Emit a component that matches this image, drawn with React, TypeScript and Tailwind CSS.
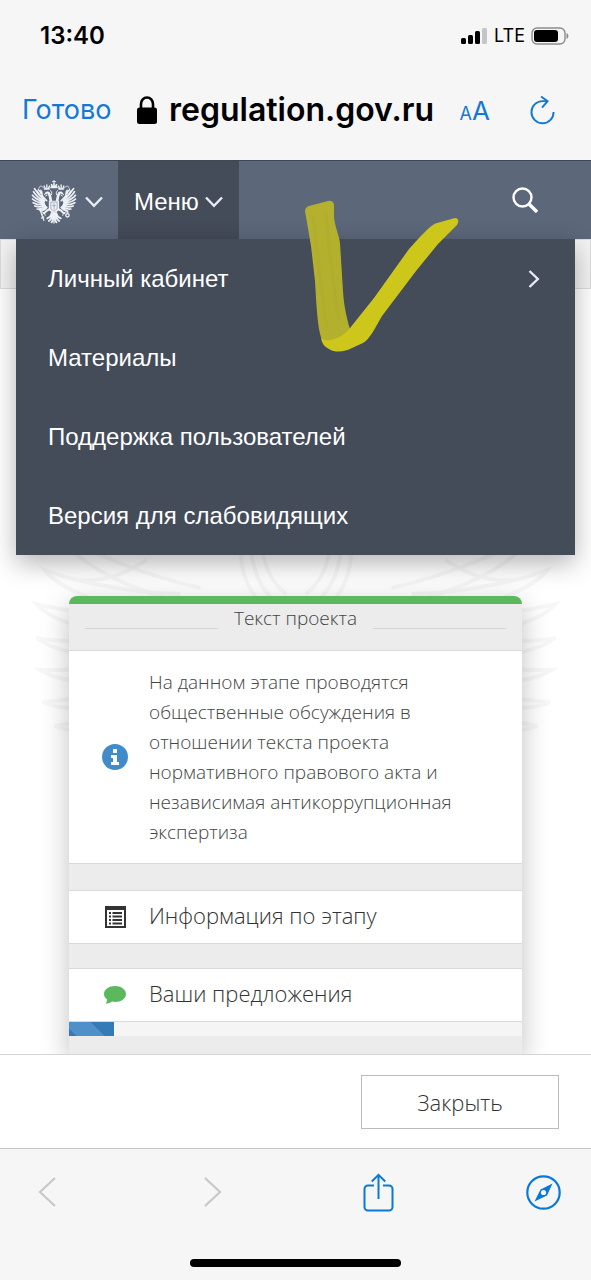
import type { ReactNode } from 'react';

const menuItems = [
  { label: 'Личный кабинет', nested: true },
  { label: 'Материалы', nested: false },
  { label: 'Поддержка пользователей', nested: false },
  { label: 'Версия для слабовидящих', nested: false },
];

function Chevron({ className }: { className: string }) {
  return (
    <svg className={className} viewBox="0 0 18 12" fill="none" stroke="currentColor" strokeWidth="2.4">
      <path d="M1 1.5 9 9.8 17 1.5" />
    </svg>
  );
}

function EagleHalf() {
  return (
    <g fill="none" stroke="currentColor" strokeLinecap="round">
      {/* Wing feathers */}
      <path
        strokeWidth="5.2"
        d="M40 62C26 50 16 38 9 26M38 65C22 54 11 45 6 35M37 68C20 60 8 54 3 46M38 71C22 68 10 64 3 57M39 74C26 75 14 73 5 68M41 77C32 81 21 82 10 78M43 80C36 86 27 88 17 87M46 82C41 89 34 92 27 93"
      />
      <path strokeWidth="4.500" d="M28 40C26 34 24 32 21 29M32 44C32 36 30 33 28 31M46 62C40 56 36 52 32 47M30 50C24 44 20 40 17 33M36 56 28 46" />
      {/* Neck, head and beak */}
      <path strokeWidth="8" d="M59 66C56 56 57 50 53 42" />
      <path strokeWidth="6" d="M53 40C50 36 46 37 43 40" />
      <path strokeWidth="3" d="M43 40 38 44M47 45 42 48M60 44C62 38 60 34 57 32" />
      {/* Small crown */}
      <path strokeWidth="4" d="M39 27h14M38 18l3 7M46 15v10M54 18l-3 7" />
      <path strokeWidth="2.5" d="M37 24C31 18 25 14 22 25M55 25C58 18 61 17 64 19" />
      {/* Leg and tail */}
      <path strokeWidth="6" d="M55 87C48 90 43 94 39 99" />
      <path strokeWidth="3" d="M39 99 32 96M39 99 33 103M39 99 41 106" />
      <path strokeWidth="5.5" d="M61 99C59 108 53 113 47 115M63 101C62 113 58 119 52 123M66 101C66 116 63 124 60 127" />
    </g>
  );
}

function Emblem() {
  return (
    <svg className="h-11 w-[46px] text-[#eef1f5]" viewBox="0 0 135 132" aria-label="Герб">
      <EagleHalf />
      <g transform="matrix(-1 0 0 1 135 0)">
        <EagleHalf />
      </g>
      <g fill="none" stroke="currentColor" strokeLinecap="round">
        <path strokeWidth="3" d="M67.5 1v10M63 5h9" />
        <path strokeWidth="5" d="M60 22h15M60 14l3 6M75 14l-3 6M67.5 12v8" />
        <path strokeWidth="4" d="M25 87 37 121M24 90l5-2M30 114l7-3M67.5 105v24" />
        <circle cx="108" cy="106" r="5" strokeWidth="4" />
        <path strokeWidth="2.5" d="M108 101v-8M104 96h8" />
      </g>
      <path fill="currentColor" d="M52 62h31v26c0 6-10 8-15.500 13C61 96 52 94 52 88z" />
      <path fill="none" stroke="#8d97a8" strokeWidth="2" d="M58 66h19v20l-9.500 8L58 86zM67.500 69v19M62 77h11" />
    </svg>
  );
}

function WatermarkWing() {
  return (
    <g>
      <path d="M200 22C130 6 90-16 60-30C78-2 120 20 190 40" />
      <path d="M180 28C120 26 70 14 44 4C60 24 110 44 170 50M170 50C110 50 66 46 36 38C54 58 100 68 160 70" />
      <path d="M160 68C110 74 66 78 36 72C58 88 100 94 150 90M150 88C110 98 74 106 40 104C62 118 100 118 146 108" />
      <path d="M146 106C116 122 80 134 42 136C68 148 100 140 140 126M140 124C116 142 84 156 54 160C80 170 110 160 136 146" />
      <path d="M80 14C110 16 130 4 146-6M70 50C90 50 104 42 116 34" />
      <path d="M240-30C238 10 250 30 270 46M250-30C250 4 260 24 278 38M260-30C262-2 270 16 286 28" />
    </g>
  );
}

/* Pale coat of arms behind the stage card */
function Watermark() {
  return (
    <svg
      className="absolute bottom-72 left-1/2 h-60 w-[591px] -translate-x-1/2"
      viewBox="0 -40 591 240"
      fill="none"
      stroke="#f7f7f7"
      strokeWidth="4"
      aria-hidden="true"
    >
      <WatermarkWing />
      <g transform="matrix(-1 0 0 1 591 0)">
        <WatermarkWing />
      </g>
    </svg>
  );
}

function StatusBar() {
  return (
    <div className="flex h-[72px] items-center justify-between pr-[22px] pl-10 font-[Inter]">
      <span className="text-2xl font-semibold">13:40</span>
      <div className="flex items-center gap-1.5">
        <svg className="h-4 w-[27px]" viewBox="0 0 27 16">
          <rect x="0" y="10" width="5" height="6" rx="1.5" />
          <rect x="7" y="7" width="5" height="9" rx="1.5" />
          <rect x="14" y="3" width="5" height="13" rx="1.5" />
          <rect x="21" y="0" width="5" height="16" rx="1.5" fill="#c5c5c5" />
        </svg>
        <span className="text-lg leading-6">LTE</span>
        <svg className="h-[18px] w-[38px]" viewBox="0 0 38 18">
          <rect x="1" y="1" width="33" height="16" rx="5" fill="none" stroke="#8c8c8c" strokeWidth="1.4" />
          <rect x="3" y="3" width="24" height="12" rx="3" />
          <path d="M35.500 6c2.500 1 2.500 5 0 6z" fill="#8c8c8c" />
        </svg>
      </div>
    </div>
  );
}

function AddressBar() {
  return (
    <div className="flex h-[88px] items-center justify-between pr-9 pb-3 pl-[22px] font-[Inter]">
      <button className="text-[27px] text-[#1279d8]">Готово</button>
      <div className="flex items-center gap-3">
        <svg className="h-7 w-5" viewBox="0 0 20 28">
          <rect x="0" y="11.500" width="20" height="16.500" rx="2.500" />
          <path d="M4 13V8a6 6.500 0 0 1 12 0v5" fill="none" stroke="#000" strokeWidth="2.600" />
        </svg>
        <span className="text-[32px] font-semibold">regulation.gov.ru</span>
      </div>
      <div className="flex items-center gap-10">
        <button className="flex items-baseline text-[#1279d8]" aria-label="Размер текста">
          <span className="text-lg">A</span>
          <span className="text-[26px]">A</span>
        </button>
        <button className="text-[#1279d8]" aria-label="Обновить">
          <svg className="h-[30px] w-[25px]" viewBox="0 0 26 30" fill="none" stroke="currentColor" strokeWidth="2">
            <path d="M24.500 17A11.500 11.500 0 1 1 13 5.800H18" />
            <path d="M11.500 1 18.300 5.800 12.500 12.500" />
          </svg>
        </button>
      </div>
    </div>
  );
}

function SiteMenu() {
  return (
    <ul className="absolute inset-x-4 top-full z-10 bg-[#444b59] shadow-[0_8px_24px_rgba(0,0,0,0.3)]">
      {menuItems.map((item) => (
        <li key={item.label}>
          <a href="#" className="flex h-[79px] items-center justify-between px-8 text-2xl text-white">
            {item.label}
            {item.nested && <Chevron className="h-3 w-[18px] -rotate-90 text-[#e8ecf2]" />}
          </a>
        </li>
      ))}
    </ul>
  );
}

function SiteHeader() {
  return (
    <header className="relative flex h-[79px] items-center border-t border-[#3e4855] bg-[#5c677a] font-['Liberation_Sans',sans-serif] text-white">
      <button className="flex h-full w-[118px] items-center gap-2 pt-1 pl-[31px]" aria-label="Разделы">
        <Emblem />
        <Chevron className="h-3 w-[18px] text-[#e8ecf2]" />
      </button>
      <button className="flex h-full items-center gap-1.5 bg-[#444b59] px-4 pt-1 text-2xl">
        Меню
        <Chevron className="h-3 w-[18px] text-[#e8ecf2]" />
      </button>
      <button className="mr-[53px] ml-auto" aria-label="Поиск">
        <svg className="size-[26px]" viewBox="0 0 26 26" fill="none" stroke="currentColor" strokeWidth="2.4">
          <circle cx="10.500" cy="10.500" r="9" />
          <path d="M17 17 25 25" strokeWidth="3.400" />
        </svg>
      </button>
      <SiteMenu />

      {/* Highlighter tick */}
      <svg className="pointer-events-none absolute top-[38px] left-[304px] z-20 h-[156px] w-[158px]" viewBox="0 0 158 156">
        <path
          fill="#b9b52b"
          fillOpacity="0.95"
          d="M1 12C1 9 3 8 5 7L24 2Q29 1 30 6L30 18C31 28 35 36 36 44L39 92C40 108 43 120 46 130L38 148L22 148C14 139 13 116 11 82L7 47Z"
        />
        <path
          fill="#cdc71c"
          d="M46 129L70 99L105 50L115 39C124 30 127 26 133 24L151 19C155 19 155 23 153 26L134 45L112 72L78 117C70 131 65 141 59 144L48 149C41 153 31 154 25 150C19 147 18 143 17 139C22 144 38 140 46 129Z"
        />
        <path
          fill="none"
          stroke="#a9a631"
          strokeWidth="3"
          d="M9 16C13 50 16 90 23 128M22 14C25 50 29 84 35 122"
          opacity="0.35"
        />
      </svg>
    </header>
  );
}

function CardRow({ icon, children }: { icon: ReactNode; children: ReactNode }) {
  return (
    <div className="flex items-center border-y border-[#d9d9d9] bg-white">
      <div className="flex w-20 shrink-0 justify-center pl-3">{icon}</div>
      {children}
    </div>
  );
}

function StageCard() {
  return (
    <section className="relative mx-[69px] rounded-t-lg border-t-8 border-[#5cb85c] bg-[#ececec] shadow-[0_8px_28px_rgba(0,0,0,0.25)]">
      <div className="flex h-[46px] items-start gap-4 px-4 text-[19px] text-[#444]">
        <span className="mt-6 h-px flex-1 bg-[#d4d4d4]" />
        <h2 className="leading-7">Текст проекта</h2>
        <span className="mt-6 h-px flex-1 bg-[#d4d4d4]" />
      </div>
      <CardRow
        icon={
          <svg className="size-[26px]" viewBox="0 0 26 26">
            <circle cx="13" cy="13" r="13" fill="#428bca" />
            <path fill="#fff" d="M11 5h4v4h-4zM9 11h6v7h2v3H9v-3h2v-4H9z" />
          </svg>
        }
      >
        <p className="py-4 pr-14 text-[19px] leading-[30px] text-[#444]">
          На данном этапе проводятся общественные обсуждения в отношении текста проекта нормативного правового акта и
          независимая антикоррупционная экспертиза
        </p>
      </CardRow>
      <div className="h-[26px]" />
      <CardRow
        icon={
          <svg className="h-[22px] w-[21px]" viewBox="0 0 21 22" fill="#333">
            <path fillRule="evenodd" d="M0 0h21v22H0zM2 4v16h17V4z" />
            <path d="M4 6h2v2H4zM7.500 6H17v2H7.500zM4 9.500h2v2H4zM7.500 9.500H17v2H7.500zM4 13h2v2H4zM7.500 13H17v2H7.500zM4 16.500h2v2H4zM7.500 16.500H17v2H7.500z" />
          </svg>
        }
      >
        <a href="#" className="pt-2.5 pb-3.5 text-[22px] leading-7 text-[#333]">
          Информация по этапу
        </a>
      </CardRow>
      <div className="h-6" />
      <CardRow
        icon={
          <svg className="h-[18px] w-[22px]" viewBox="0 0 22 18" fill="#5cb85c">
            <path d="M11 0C17 0 22 3.500 22 8s-5 8-11 8c-1 0-2-.1-3-.4C6.500 17 4 17.600 1.500 17.600C2.600 16.500 3 15.200 3 13.600C1 12 0 10 0 8C0 3.500 5 0 11 0Z" />
          </svg>
        }
      >
        <a href="#" className="pt-2.5 pb-3.5 text-[22px] leading-7 text-[#333]">
          Ваши предложения
        </a>
      </CardRow>
      <div className="h-3.5 bg-[#f5f5f5]">
        <div className="h-full w-1/10 bg-[linear-gradient(45deg,#337ab7_12%,#4f90c9_12%,#4f90c9_60%,#337ab7_60%)]" />
      </div>
      <div className="h-[18px]" />
    </section>
  );
}

function BottomBar() {
  return (
    <footer className="border-t border-[#c4c4c4] bg-[#f6f6f6]">
      <div className="flex h-[86px] items-center justify-between px-[29px]">
        <button className="flex w-9 justify-center text-[#c8c8c8]" aria-label="Назад">
          <svg className="h-[30px] w-[18px]" viewBox="0 0 18 30" fill="none" stroke="currentColor" strokeWidth="2.200">
            <path d="M17 1 2 15 17 29" />
          </svg>
        </button>
        <button className="flex w-9 justify-center text-[#c8c8c8]" aria-label="Вперёд">
          <svg className="h-[30px] w-[18px]" viewBox="0 0 18 30" fill="none" stroke="currentColor" strokeWidth="2.200">
            <path d="M1 1 16 15 1 29" />
          </svg>
        </button>
        <button className="flex w-9 justify-center text-[#0a78d8]" aria-label="Поделиться">
          <svg className="h-[39px] w-[31px]" viewBox="0 0 31 39" fill="none" stroke="currentColor" strokeWidth="2">
            <path d="M11 12.500H5A3.500 3.500 0 0 0 1.500 16v18A3.500 3.500 0 0 0 5 37.500h21a3.500 3.500 0 0 0 3.500-3.500V16a3.500 3.500 0 0 0-3.500-3.500h-6" />
            <path d="M15.500 26V2M8.800 8.500l6.700-6.700 6.700 6.700" />
          </svg>
        </button>
        <button className="flex w-9 justify-center text-[#0a78d8]" aria-label="Открыть в браузере">
          <svg className="size-[35px]" viewBox="0 0 35 35">
            <circle cx="17.500" cy="17.500" r="16.200" fill="none" stroke="currentColor" strokeWidth="2.200" />
            <path fill="currentColor" d="M26.500 8.500 21 20.500 8.500 26.500 14.500 14.500Z" />
            <circle cx="17.500" cy="17.500" r="2.600" fill="#f6f6f6" />
          </svg>
        </button>
      </div>
      <div className="flex h-[45px] justify-center pt-6">
        <div className="h-2 w-[211px] rounded-full bg-black" />
      </div>
    </footer>
  );
}

export default function App() {
  return (
    <div className="flex min-h-screen flex-col bg-white text-black">
      <div className="bg-[#f6f6f6]">
        <StatusBar />
        <AddressBar />
      </div>
      <SiteHeader />
      <main className="relative flex-1 overflow-hidden font-['Open_Sans',sans-serif] font-light">
        <div className="h-[50px] border border-[#dcdcdc] bg-[#f3f3f3]" />
        <Watermark />
        <div className="h-[307px]" />
        <StageCard />
      </main>
      <div className="relative flex justify-end border-t border-[#d4d4d4] bg-white px-8 pt-5 pb-[19px] font-['Open_Sans',sans-serif] font-light">
        <button className="h-[54px] w-[198px] border border-[#bbb] text-[22px] text-[#333]">Закрыть</button>
      </div>
      <BottomBar />
    </div>
  );
}
